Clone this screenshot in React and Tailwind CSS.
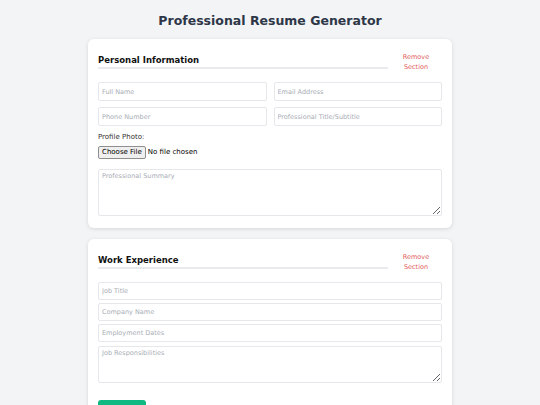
import React from "react";

const font = { fontFamily: '"DejaVu Sans", Verdana, sans-serif' };

function SectionHeader({ title }) {
  return (
    <div className="flex items-start justify-between gap-[5px]">
      <h2 className="mt-[2px] flex-1 border-b-2 border-[#e8eaee] pb-[1px] text-[8.5px] leading-[12px] font-bold text-[#111]">
        {title}
      </h2>
      <button className="mr-[3px] w-[46px] px-[2px] text-center text-[6.5px] leading-[10px] text-[#e25c5c]">
        Remove Section
      </button>
    </div>
  );
}

function Field({ placeholder, h = "h-[19px]" }) {
  return (
    <input
      placeholder={placeholder}
      className={`${h} w-full rounded-[2px] border border-[#e5e7eb] px-[3px] text-[6.5px] text-gray-800 placeholder:text-[#a9adb5] outline-none`}
    />
  );
}

export default function App() {
  return (
    <div className="min-h-[405px] bg-[#f3f4f6] pt-[13px]" style={font}>
      <h1 className="text-center text-[12.5px] leading-[16px] font-bold text-[#2d3748]">
        Professional Resume Generator
      </h1>
      <div className="mx-auto mt-[10px] flex w-[364px] flex-col gap-[11px]">
        <section className="rounded-[6px] bg-white px-[10px] pt-[13px] pb-[12px] shadow-[0_1px_4px_rgba(0,0,0,0.12)]">
          <SectionHeader title="Personal Information" />
          <div className="mt-[10px] grid grid-cols-2 gap-x-[7px] gap-y-[6px]">
            <Field placeholder="Full Name" />
            <Field placeholder="Email Address" />
            <Field placeholder="Phone Number" />
            <Field placeholder="Professional Title/Subtitle" />
          </div>
          <div className="mt-[6px] text-[7px] leading-[10px] text-[#333]">Profile Photo:</div>
          <div className="mt-[4px] flex items-center text-[7px] text-black">
            <span className="flex h-[13px] items-center rounded-[2px] border border-[#8f8f8f] bg-[#efefef] px-[3px]">
              Choose File
            </span>
            <span className="ml-[2px]">No file chosen</span>
          </div>
          <textarea
            placeholder="Professional Summary"
            className="mt-[10px] block h-[47px] w-full rounded-[2px] border border-[#e5e7eb] px-[3px] py-[2px] text-[6.5px] placeholder:text-[#a9adb5] outline-none"
          />
        </section>
        <section className="rounded-t-[6px] bg-white px-[10px] pt-[13px] pb-[20px] shadow-[0_1px_4px_rgba(0,0,0,0.12)]">
          <SectionHeader title="Work Experience" />
          <div className="mt-[10px] flex flex-col gap-[3px]">
            <Field placeholder="Job Title" h="h-[18px]" />
            <Field placeholder="Company Name" h="h-[18px]" />
            <Field placeholder="Employment Dates" h="h-[18px]" />
            <textarea
              placeholder="Job Responsibilities"
              className="mt-[1px] block h-[37px] w-full rounded-[2px] border border-[#e5e7eb] px-[3px] py-[2px] text-[6.5px] placeholder:text-[#a9adb5] outline-none"
            />
          </div>
          <button className="mt-[17px] h-[34px] w-[48px] rounded-[3px] bg-[#10b981] text-[7px] text-white">
            Add Job
          </button>
        </section>
      </div>
    </div>
  );
}
